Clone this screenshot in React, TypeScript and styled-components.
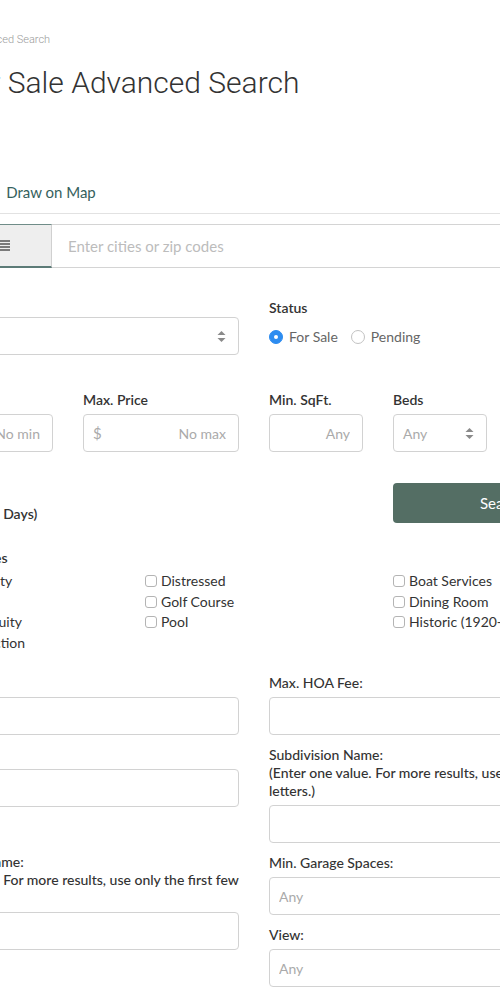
import React from 'react';
import styled, { createGlobalStyle } from 'styled-components';

const GlobalStyle = createGlobalStyle`
  html, body {
    margin: 0;
    padding: 0;
    background: #fff;
    overflow: hidden;
  }
  body {
    font-family: Lato, 'Open Sans', Arial, sans-serif;
    color: #333;
  }
  * {
    box-sizing: border-box;
  }
`;

const Page = styled.div`
  width: 714px;
  margin-left: -103px;
  padding-top: 32px;
`;

const Breadcrumb = styled.div`
  font-family: Roboto, Arial, sans-serif;
  font-weight: 300;
  font-size: 11px;
  line-height: 16px;
  color: #9a9a9a;
  white-space: nowrap;
`;

const Title = styled.h1`
  margin: 16px 0 0;
  font-family: Roboto, Arial, sans-serif;
  font-weight: 300;
  font-size: 30px;
  line-height: 38px;
  color: #333;
  white-space: nowrap;
`;

const Tabs = styled.div`
  display: flex;
  gap: 31px;
  margin-top: 70px;
  border-bottom: 1px solid #e2e2e2;
`;

const Tab = styled.div`
  padding: 10px 0 11px;
  font-size: 15px;
  line-height: 20px;
  color: #35615d;
`;

const SearchGroup = styled.div`
  display: flex;
  height: 44px;
  margin-top: 10px;
`;

const ModeButton = styled.div`
  width: 155px;
  display: flex;
  align-items: center;
  justify-content: flex-end;
  padding-right: 41px;
  background: #eeeeee;
  border-top: 1px solid #6f8c88;
  border-bottom: 2px solid #5c7b77;
  border-right: 1px solid #d0d0d0;
  color: #777;
`;

const SearchInput = styled.input`
  flex: 1;
  border: 1px solid #d4d4d4;
  border-left: none;
  padding: 0 16px;
  font-family: Lato, sans-serif;
  font-size: 15px;
  color: #333;
  outline: none;
  &::placeholder {
    color: #bcbcbc;
  }
`;

const Row = styled.div<{ $top: number }>`
  display: grid;
  grid-template-columns: repeat(12, 1fr);
  column-gap: 30px;
  margin-top: ${(p) => p.$top}px;
`;

const Col = styled.div<{ $span: number; $start?: number; $end?: boolean }>`
  grid-column: ${(p) => (p.$start ? `${p.$start} / ` : '')}span ${(p) => p.$span};
  align-self: ${(p) => (p.$end ? 'end' : 'start')};
`;

const Label = styled.div<{ $gap?: number }>`
  font-size: 14px;
  font-weight: 600;
  line-height: 18px;
  color: #333;
  margin-bottom: ${(p) => p.$gap ?? 5}px;
`;

const Box = styled.div`
  height: 38px;
  border: 1px solid #d2d2d2;
  border-radius: 4px;
  display: flex;
  align-items: center;
  padding: 0 12px 0 9px;
  font-size: 14px;
  color: #aaa;
  background: #fff;
`;

const BoxInput = styled.input<{ $right?: boolean }>`
  flex: 1;
  min-width: 0;
  border: none;
  outline: none;
  padding: 0;
  font-family: Lato, sans-serif;
  font-size: 14px;
  text-align: ${(p) => (p.$right ? 'right' : 'left')};
  &::placeholder {
    color: #aaa;
  }
`;

const Prefix = styled.span`
  font-size: 15px;
  color: #aaa;
`;

const SelectValue = styled.span`
  flex: 1;
  color: #aaa;
`;

const Radios = styled.div`
  display: flex;
  align-items: center;
  margin-top: 10px;
  font-size: 14px;
  line-height: 20px;
  color: #666;
`;

const RadioItem = styled.label`
  display: flex;
  align-items: center;
  gap: 6px;
  margin-right: 13px;
`;

const RadioDot = styled.span<{ $checked?: boolean }>`
  width: 14px;
  height: 14px;
  border-radius: 50%;
  border: 1px solid ${(p) => (p.$checked ? '#2d8cf0' : '#c2c2c2')};
  background: ${(p) => (p.$checked ? '#2d8cf0' : '#fff')};
  display: flex;
  align-items: center;
  justify-content: center;
  &::after {
    content: '';
    width: 4px;
    height: 4px;
    border-radius: 50%;
    background: #fff;
  }
`;

const SearchButton = styled.button`
  width: 100%;
  height: 40px;
  border: none;
  border-radius: 4px;
  background: #546e64;
  color: #fff;
  font-family: Lato, sans-serif;
  font-size: 15px;
`;

const Checks = styled.div`
  display: flex;
  flex-direction: column;
`;

const CheckItem = styled.label`
  display: flex;
  align-items: center;
  gap: 4px;
  font-size: 14px;
  line-height: 20.5px;
  color: #333;
  white-space: nowrap;
`;

const CheckBox = styled.span`
  width: 12px;
  height: 12px;
  border: 1px solid #b4b4b4;
  border-radius: 3px;
  background: #fff;
  flex: none;
`;

const Stack = styled.div`
  display: flex;
  flex-direction: column;
`;

const Field = styled.div<{ $pad?: number }>`
  margin-bottom: 11px;
  padding-top: ${(p) => p.$pad ?? 0}px;
`;

const FieldLabel = styled(Label)`
  font-weight: 500;
`;

const Arrows = () => (
  <svg width="9" height="11" viewBox="0 0 9 11">
    <path d="M4.5 0 L8.5 4 L0.5 4 Z" fill="#8a8a8a" />
    <path d="M4.5 11 L8.5 7 L0.5 7 Z" fill="#8a8a8a" />
  </svg>
);

const ListIcon = () => (
  <svg width="14" height="11" viewBox="0 0 14 11">
    <rect x="0" y="0" width="14" height="2" fill="#7a7a7a" />
    <rect x="0" y="3" width="14" height="2" fill="#7a7a7a" />
    <rect x="0" y="6" width="14" height="2" fill="#7a7a7a" />
    <rect x="0" y="9" width="14" height="2" fill="#7a7a7a" />
  </svg>
);

const Select = ({ value }: { value: string }) => (
  <Box>
    <SelectValue>{value}</SelectValue>
    <Arrows />
  </Box>
);

const Check = ({ label }: { label: string }) => (
  <CheckItem>
    <CheckBox />
    {label}
  </CheckItem>
);

const TextField = ({ label, placeholder }: { label: React.ReactNode; placeholder?: string }) => (
  <Field>
    <FieldLabel>{label}</FieldLabel>
    <Box>
      <BoxInput placeholder={placeholder} />
    </Box>
  </Field>
);

const hint = '(Enter one value. For more results, use only the first few letters.)';

const features = [
  ['55+ Community', 'Auction', 'Seller Held Equity', 'New Construction'],
  ['Distressed', 'Golf Course', 'Pool'],
  ['Boat Services', 'Dining Room', 'Historic (1920-1960)'],
];

const App = () => {
  return (
    <>
      <GlobalStyle />
      <Page>
        <Breadcrumb>Home / Sale / Advanced Search</Breadcrumb>
        <Title>Unit For Sale Advanced Search</Title>

        <Tabs>
          <Tab>Search Area</Tab>
          <Tab>Draw on Map</Tab>
        </Tabs>

        <SearchGroup>
          <ModeButton>
            <ListIcon />
          </ModeButton>
          <SearchInput placeholder="Enter cities or zip codes" />
        </SearchGroup>

        <Row $top={31}>
          <Col $span={6}>
            <Label $gap={0}>Property Type</Label>
            <Select value="All" />
          </Col>
          <Col $span={6}>
            <Label $gap={0}>Status</Label>
            <Radios>
              <RadioItem>
                <RadioDot $checked />
                For Sale
              </RadioItem>
              <RadioItem>
                <RadioDot />
                Pending
              </RadioItem>
            </Radios>
          </Col>
        </Row>

        <Row $top={36}>
          <Col $span={3}>
            <Label>Min. Price</Label>
            <Box>
              <Prefix>$</Prefix>
              <BoxInput $right placeholder="No min" />
            </Box>
          </Col>
          <Col $span={3}>
            <Label>Max. Price</Label>
            <Box>
              <Prefix>$</Prefix>
              <BoxInput $right placeholder="No max" />
            </Box>
          </Col>
          <Col $span={2}>
            <Label>Min. SqFt.</Label>
            <Box>
              <BoxInput $right placeholder="Any" />
            </Box>
          </Col>
          <Col $span={2}>
            <Label>Beds</Label>
            <Select value="Any" />
          </Col>
          <Col $span={2}>
            <Label>Baths</Label>
            <Select value="Any" />
          </Col>
        </Row>

        <Row $top={31}>
          <Col $span={6} $end>
            <Label $gap={0}>New Listings (14 Days)</Label>
          </Col>
          <Col $span={4} $start={9}>
            <SearchButton>Search</SearchButton>
          </Col>
        </Row>

        <Row $top={26}>
          <Col $span={12}>
            <Label $gap={4}>Property Features</Label>
          </Col>
          {features.map((list, i) => (
            <Col $span={4} key={i}>
              <Checks>
                {list.map((f) => (
                  <Check key={f} label={f} />
                ))}
              </Checks>
            </Col>
          ))}
        </Row>

        <Row $top={21}>
          <Col $span={6}>
            <Stack>
              <TextField label="Min. Acres:" />
              <TextField label="Year Built:" />
              <Field $pad={3}>
                <Check label="Waterfront" />
              </Field>
              <TextField
                label={
                  <>
                    Development Name:
                    <br />
                    {hint}
                  </>
                }
              />
            </Stack>
          </Col>
          <Col $span={6}>
            <Stack>
              <TextField label="Max. HOA Fee:" />
              <TextField
                label={
                  <>
                    Subdivision Name:
                    <br />
                    {hint}
                  </>
                }
              />
              <TextField label="Min. Garage Spaces:" placeholder="Any" />
              <TextField label="View:" placeholder="Any" />
            </Stack>
          </Col>
        </Row>
      </Page>
    </>
  );
};

export default App;
